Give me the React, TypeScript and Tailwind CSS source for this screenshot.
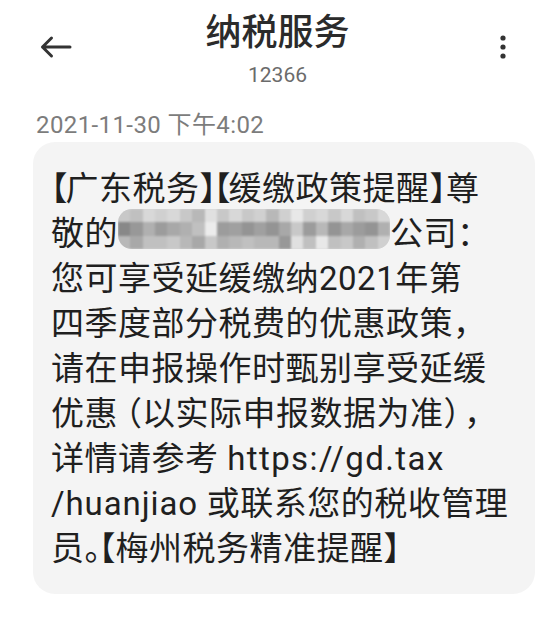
import React from "react";

const FONT = "font-['Roboto','Noto_Sans_CJK_SC',sans-serif]";

const TOP = ["c8","c0","d8","d0","d8","c8","b8","e0","c8","d8","c8","d0","b8","d0","e8","d0","d8","c8","d8","c0","c8","d8"];
const MID = ["88","98","b0","9c","a8","b0","c0","ec","9c","a0","94","a0","94","a8","c8","9c","b8","94","a8","9c","94","b0"];
const BOT = ["b8","a8","c0","c0","c8","b8","a8","c8","b0","b8","c0","b8","b8","98","e0","c0","e8","c0","c8","b0","c0","d0"];

function Blur() {
  const rows = [TOP, MID, BOT];
  return (
    <span className="inline-block h-[40px] w-[272px] -my-[4px] align-baseline overflow-hidden rounded-[14px] bg-[#d6d6d6]">
      <span className="grid h-full w-full grid-cols-[repeat(22,1fr)] grid-rows-3 blur-[1px]">
        {rows.map((r, ri) =>
          r.map((c, ci) => (
            <span key={ri + "-" + ci} style={{ backgroundColor: "#" + c + c + c }} />
          ))
        )}
      </span>
    </span>
  );
}

function Half({ ch, t }: { ch: string; t: string }) {
  return <span className={"[font-feature-settings:'halt'] " + t}>{ch}</span>;
}

export default function App() {
  return (
    <div className={"w-[555px] h-[619px] bg-white overflow-hidden " + FONT}>
      <div className="grid grid-cols-[1fr_auto_1fr] pt-[13px]">
        <div className="pl-[39px] pt-[22px]">
          <svg width="34" height="24" viewBox="0 0 34 24" fill="none" stroke="#333" strokeWidth="3" strokeLinecap="round" strokeLinejoin="round">
            <path d="M31 12H3.5M12.5 3L3.5 12L12.5 21" />
          </svg>
        </div>
        <div className="flex flex-col items-center">
          <div className="text-[36px] leading-[40px] font-medium text-[#2b2b2b]">纳税服务</div>
          <div className="mt-[10px] text-[21px] leading-[24px] text-[#6b6b6b]">12366</div>
        </div>
        <div className="flex justify-end pr-[47px] pt-[19px]">
          <svg width="10" height="30" viewBox="0 0 10 30" fill="#333">
            <circle cx="5" cy="6" r="2.6" />
            <circle cx="5" cy="15" r="2.6" />
            <circle cx="5" cy="24" r="2.6" />
          </svg>
        </div>
      </div>
      <div className="mt-[24px] pl-[36px] text-[24px] leading-[28px] tracking-[0.4px] text-[#7c7c7c]">2021-11-30 下午4:02</div>
      <div className="ml-[33px] mt-[3px] w-[502px] rounded-[22px] bg-[#f4f4f4] pl-[18px] pt-[24px] pb-[23px] text-[33px] leading-[45px] tracking-[0.5px] text-[#1f1f1f] whitespace-nowrap">
        <div>
          <Half ch="【" t="tracking-[-2px]" />广东税务<Half ch="】" t="tracking-[-2px]" />
          <Half ch="【" t="tracking-[-2px]" />缓缴政策提醒<Half ch="】" t="tracking-[0px]" />尊
        </div>
        <div>
          敬的<Blur />公司：
        </div>
        <div>您可享受延缓缴纳2021年第</div>
        <div>四季度部分税费的优惠政策，</div>
        <div>请在申报操作时甄别享受延缓</div>
        <div>
          优<span className="tracking-[8px]">惠</span><Half ch="（" t="tracking-[0px]" />以实际申报数据为准<Half ch="）" t="tracking-[4px]" />，
        </div>
        <div>
          详情请参考 <span className="tracking-[1.4px]">https://gd.tax</span>
        </div>
        <div>
          <span className="tracking-[0.9px]">/huanjiao</span> 或联系您的税收管理
        </div>
        <div>
          员<Half ch="。" t="tracking-[-2px]" />
          <Half ch="【" t="tracking-[0px]" />梅州税务精准提醒<Half ch="】" t="" />
        </div>
      </div>
    </div>
  );
}
